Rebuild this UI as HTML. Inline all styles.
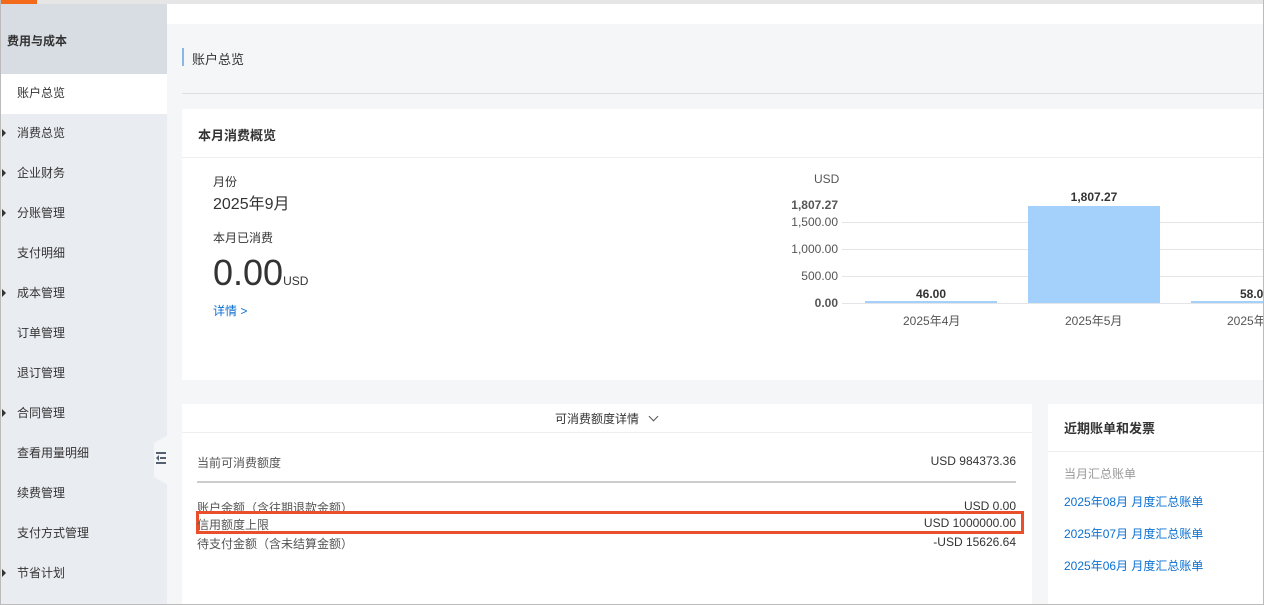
<!DOCTYPE html>
<html><head><meta charset="utf-8"><style>
*{margin:0;padding:0;box-sizing:border-box}
body{width:1264px;height:605px;overflow:hidden;background:#f5f6f8;font-family:"Liberation Sans","Noto Sans CJK SC",sans-serif;font-size:12px;color:#333;position:relative;white-space:nowrap}
.a{position:absolute}
.side{left:0;top:4px;width:167px;height:601px;background:#e9ecf0}
.sh{left:0;top:4px;width:167px;height:70px;background:#d8dce3;font-weight:bold;padding:28px 0 0 7px}
.mi{left:0;width:167px;height:40px;line-height:38px;padding-left:17px;color:#333}
.tri{position:absolute;left:2px;top:15px;border-left:4px solid #333;border-top:4px solid transparent;border-bottom:4px solid transparent}
.card{background:#fff}
.gl{height:1px;background:#e3e5e8;left:842px;width:422px}
.yl{right:426px;color:#555;text-align:right}
.bar{background:#a3d1fb}
.bl{font-weight:bold;color:#333;text-align:center;width:132px}
.lnk{color:#0b6fd2;left:1064px}
</style></head><body>
<div class="a" style="left:0;top:0;width:1264px;height:4px;background:#e6e6e6"></div>
<div class="a" style="left:0;top:0;width:37px;height:4px;background:#f46a1b"></div>
<div class="a" style="left:167px;top:4px;width:1097px;height:20px;background:#fff"></div>
<div class="a side"></div>
<div class="a sh">费用与成本</div>
<div class="a mi" style="top:74px;background:#fff">账户总览</div>
<div class="a mi" style="top:114px"><span class="tri"></span>消费总览</div>
<div class="a mi" style="top:154px"><span class="tri"></span>企业财务</div>
<div class="a mi" style="top:194px"><span class="tri"></span>分账管理</div>
<div class="a mi" style="top:234px">支付明细</div>
<div class="a mi" style="top:274px"><span class="tri"></span>成本管理</div>
<div class="a mi" style="top:314px">订单管理</div>
<div class="a mi" style="top:354px">退订管理</div>
<div class="a mi" style="top:394px"><span class="tri"></span>合同管理</div>
<div class="a mi" style="top:434px">查看用量明细</div>
<div class="a mi" style="top:474px">续费管理</div>
<div class="a mi" style="top:514px">支付方式管理</div>
<div class="a mi" style="top:554px"><span class="tri"></span>节省计划</div>
<svg class="a" style="left:154px;top:435px" width="14" height="50"><polygon points="14,0 14,50 0,42 0,8" fill="#f5f6f8"/><rect x="2" y="17" width="10" height="2" fill="#556070"/><rect x="6" y="22" width="6" height="2" fill="#556070"/><rect x="2" y="27" width="10" height="2" fill="#556070"/><path d="M5,20 L2,23 L5,26" fill="#556070"/></svg>
<div class="a" style="left:182px;top:48px;width:2px;height:18px;background:#88b8e8"></div>
<div class="a" style="left:192px;top:49px;font-size:13px">账户总览</div>
<div class="a" style="left:182px;top:93px;width:1082px;height:1px;background:#dcdfe3"></div>
<div class="a card" style="left:182px;top:109px;width:1082px;height:271px"></div>
<div class="a" style="left:182px;top:157px;width:1082px;height:1px;background:#eceef0"></div>
<div class="a" style="left:198px;top:125px;font-size:13px;font-weight:bold">本月消费概览</div>
<div class="a" style="left:213px;top:173px">月份</div>
<div class="a" style="left:213px;top:190px;font-size:16px">2025年9月</div>
<div class="a" style="left:213px;top:229px">本月已消费</div>
<div class="a" style="left:213px;top:253px;font-size:36px;line-height:40px">0.00<span style="font-size:12px">USD</span></div>
<div class="a" style="left:213px;top:302px;color:#0b6fd2">详情 &gt;</div>
<div class="a" style="left:814px;top:172px;color:#555">USD</div>
<div class="a gl" style="top:222px"></div><div class="a gl" style="top:249px"></div><div class="a gl" style="top:276px"></div><div class="a gl" style="top:303px"></div>
<div class="a yl" style="top:198px;font-weight:bold">1,807.27</div>
<div class="a yl" style="top:215px">1,500.00</div>
<div class="a yl" style="top:242px">1,000.00</div>
<div class="a yl" style="top:269px">500.00</div>
<div class="a yl" style="top:296px;font-weight:bold">0.00</div>
<div class="a bar" style="left:865px;top:301px;width:132px;height:2px"></div>
<div class="a bar" style="left:1028px;top:206px;width:132px;height:97px"></div>
<div class="a bar" style="left:1191px;top:301px;width:73px;height:2px"></div>
<div class="a bl" style="left:865px;top:287px">46.00</div>
<div class="a bl" style="left:1028px;top:190px">1,807.27</div>
<div class="a bl" style="left:1240px;top:287px;width:40px;text-align:left">58.00</div>
<div class="a" style="left:903px;top:312px;color:#555">2025年4月</div>
<div class="a" style="left:1065px;top:312px;color:#555">2025年5月</div>
<div class="a" style="left:1227px;top:312px;color:#555">2025年</div>
<div class="a card" style="left:182px;top:404px;width:850px;height:201px"></div>
<div class="a" style="left:182px;top:432px;width:850px;height:1px;background:#eceef0"></div>
<div class="a" style="left:555px;top:410px">可消费额度详情 <span style="display:inline-block;width:7px;height:7px;border-right:1px solid #555;border-bottom:1px solid #555;transform:rotate(45deg);margin:0 0 3px 8px"></span></div>
<div class="a" style="left:197px;top:454px;color:#555">当前可消费额度</div>
<div class="a" style="right:248px;top:454px">USD 984373.36</div>
<div class="a" style="left:197px;top:481px;width:819px;height:2px;background:#ccc"></div>
<div class="a" style="left:197px;top:499px;color:#555">账户余额（含往期退款金额）</div>
<div class="a" style="right:248px;top:499px">USD 0.00</div>
<div class="a" style="left:196px;top:511px;width:828px;height:23px;border:3px solid #ea4f2b"></div>
<div class="a" style="left:197px;top:516px;color:#555">信用额度上限</div>
<div class="a" style="right:248px;top:516px">USD 1000000.00</div>
<div class="a" style="left:197px;top:535px;color:#555">待支付金额（含未结算金额）</div>
<div class="a" style="right:248px;top:535px">-USD 15626.64</div>
<div class="a card" style="left:1048px;top:404px;width:216px;height:201px"></div>
<div class="a" style="left:1048px;top:451px;width:216px;height:1px;background:#eceef0"></div>
<div class="a" style="left:1064px;top:418px;font-size:13px;font-weight:bold">近期账单和发票</div>
<div class="a" style="left:1064px;top:465px;color:#999">当月汇总账单</div>
<div class="a lnk" style="top:493px">2025年08月 月度汇总账单</div>
<div class="a lnk" style="top:525px">2025年07月 月度汇总账单</div>
<div class="a lnk" style="top:557px">2025年06月 月度汇总账单</div>
<div class="a" style="left:0;top:0;width:1264px;height:605px;border:1px solid #bbb;border-top:none"></div>
</body></html>
